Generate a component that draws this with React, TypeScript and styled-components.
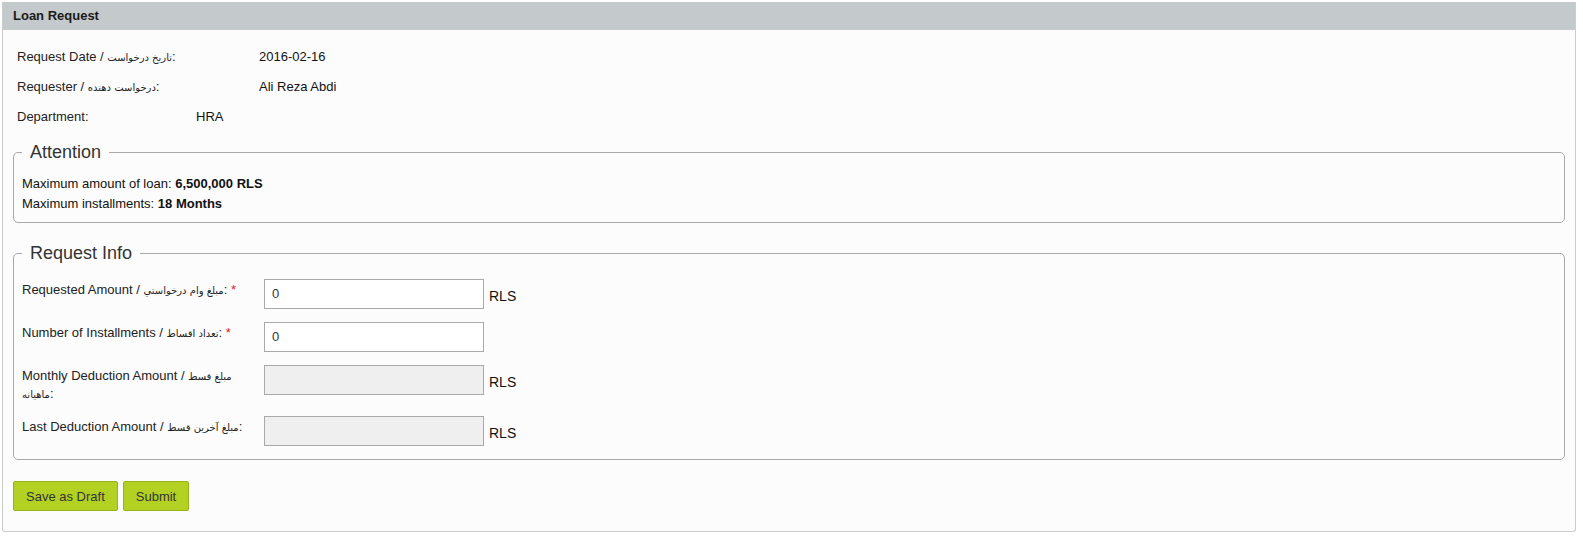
import React from "react"
import styled, { createGlobalStyle } from "styled-components"

interface InfoRow {
  label: string
  fa?: string
  value: string
  labelWidth: number
}

interface FormRow {
  label: string
  fa: string
  required?: boolean
  disabled?: boolean
  unit?: boolean
  value?: string
}

const infoRows: InfoRow[] = [
  { label: "Request Date / ", fa: "تاریخ درخواست", value: "2016-02-16", labelWidth: 242 },
  { label: "Requester / ", fa: "درخواست دهنده", value: "Ali Reza Abdi", labelWidth: 242 },
  { label: "Department", value: "HRA", labelWidth: 179 },
]

const formRows: FormRow[] = [
  { label: "Requested Amount / ", fa: "مبلغ وام درخواستي", required: true, unit: true, value: "0" },
  { label: "Number of Installments / ", fa: "تعداد اقساط", required: true, value: "0" },
  { label: "Monthly Deduction Amount / ", fa: "مبلغ قسط ماهيانه", disabled: true, unit: true },
  { label: "Last Deduction Amount / ", fa: "مبلغ آخرین قسط", disabled: true, unit: true },
]

const GlobalStyle = createGlobalStyle`
  html, body {
    margin: 0;
    padding: 0;
    background: #ffffff;
  }
  body {
    font-family: "Liberation Sans", Arial, "DejaVu Sans", sans-serif;
    font-size: 13px;
    color: #333;
  }
`

const App = () => {
  return (
    <Page>
      <GlobalStyle />
      <Panel>
        <PanelHeader>Loan Request</PanelHeader>
        <PanelBody>
          <InfoList>
            {infoRows.map(row => (
              <InfoLine key={row.label}>
                <InfoLabel $width={row.labelWidth}>
                  {row.label}
                  {row.fa && <Fa>{row.fa}</Fa>}:
                </InfoLabel>
                <InfoValue>{row.value}</InfoValue>
              </InfoLine>
            ))}
          </InfoList>

          <Group>
            <Legend>Attention</Legend>
            <NoteLine>
              Maximum amount of loan: <b>6,500,000 RLS</b>
            </NoteLine>
            <NoteLine>
              Maximum installments: <b>18 Months</b>
            </NoteLine>
          </Group>

          <Group $spaced>
            <Legend>Request Info</Legend>
            {formRows.map(row => (
              <FieldRow key={row.label}>
                <FieldLabel>
                  {row.label}
                  <Fa>{row.fa}</Fa>:
                  {row.required && <Required> *</Required>}
                </FieldLabel>
                <FieldInput
                  type="text"
                  defaultValue={row.value ?? ""}
                  disabled={row.disabled}
                />
                {row.unit && <Unit>RLS</Unit>}
              </FieldRow>
            ))}
          </Group>

          <Actions>
            <ActionButton>Save as Draft</ActionButton>
            <ActionButton>Submit</ActionButton>
          </Actions>
        </PanelBody>
      </Panel>
    </Page>
  )
}

const Page = styled.div`
  padding: 2px;
`

const Panel = styled.div`
  width: 1572px;
  border: 1px solid #c9cdcf;
  border-top: none;
  border-radius: 0 0 3px 3px;
  background: #fcfcfc;
`

const PanelHeader = styled.div`
  height: 28px;
  line-height: 28px;
  padding-left: 10px;
  background: #c4c9cb;
  font-weight: bold;
  font-size: 13px;
  color: #1a1a1a;
`

const PanelBody = styled.div`
  padding: 12px 10px 20px 10px;
`

const InfoList = styled.div`
  padding-left: 4px;
`

const InfoLine = styled.div`
  display: flex;
  height: 30px;
  line-height: 30px;
`

const InfoLabel = styled.div<{ $width: number }>`
  width: ${p => p.$width}px;
  color: #222;
`

const InfoValue = styled.div`
  color: #111;
`

const Fa = styled.span`
  font-family: "DejaVu Sans", sans-serif;
  font-size: 10px;
  line-height: 10px;
`

const Group = styled.fieldset<{ $spaced?: boolean }>`
  margin: ${p => (p.$spaced ? "20px" : "10px")} 0 0 0;
  padding: ${p => (p.$spaced ? "8px 8px 7px" : "11px 8px 8px")};
  border: 1px solid #a8a8a8;
  border-radius: 5px;
  min-width: 0;
`

const Legend = styled.legend`
  padding: 0 8px;
  font-size: 18px;
  line-height: 21px;
  color: #333;
`

const NoteLine = styled.div`
  line-height: 20px;
  color: #111;
`

const FieldRow = styled.div`
  display: flex;
  align-items: flex-start;
  padding: 6.5px 0;
`

const FieldLabel = styled.div`
  width: 242px;
  padding-top: 2px;
  line-height: 18px;
  color: #222;
`

const Required = styled.span`
  color: #e02020;
`

const FieldInput = styled.input`
  box-sizing: border-box;
  width: 220px;
  height: 30px;
  margin: 0;
  padding: 0 7px;
  border: 1px solid #a9a9a9;
  background: #ffffff;
  font-family: "Liberation Sans", Arial, sans-serif;
  font-size: 13px;
  color: #333;
  outline: none;

  &:disabled {
    background: #efefef;
  }
`

const Unit = styled.span`
  margin: 10px 0 0 5px;
  line-height: 15px;
  font-size: 14px;
  color: #111;
`

const Actions = styled.div`
  display: flex;
  gap: 5px;
  margin-top: 21px;
`

const ActionButton = styled.button`
  height: 30px;
  padding: 0 12px;
  border: 1px solid #97b31a;
  border-radius: 2px;
  background: #b3d123;
  font-family: "Liberation Sans", Arial, sans-serif;
  font-size: 13px;
  color: #333;
  cursor: pointer;
`

export default App
